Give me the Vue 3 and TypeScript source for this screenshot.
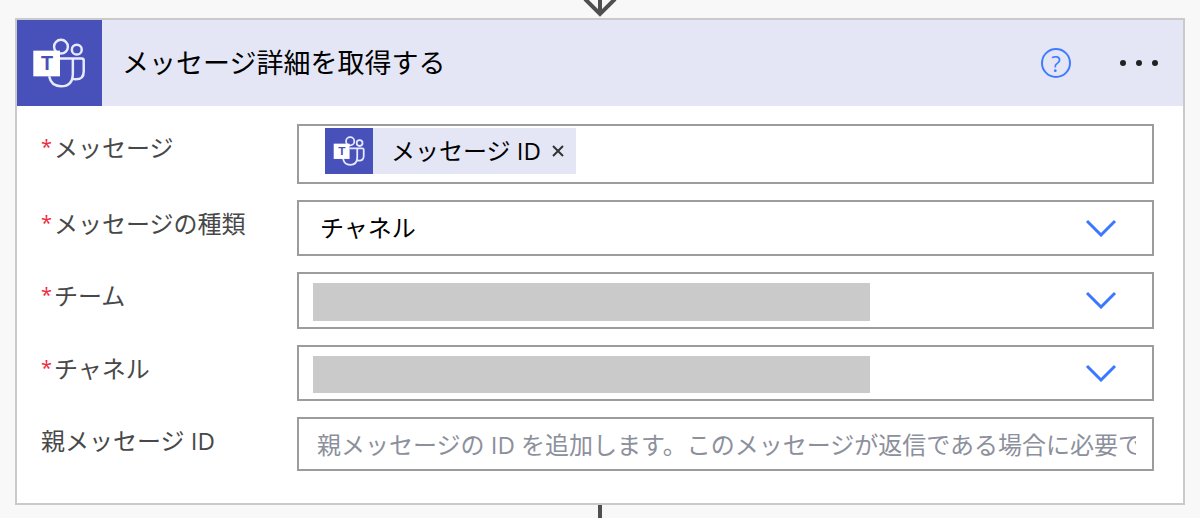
<script setup lang="ts">
import { ref } from 'vue'

interface PickerField {
  id: string
  label: string
  value: string
  hidden: boolean
  size: string
}

const pickers = ref<PickerField[]>([
  { id: 'message-type', label: 'メッセージの種類', value: 'チャネル', hidden: false, size: 'medium' },
  { id: 'team', label: 'チーム', value: '', hidden: true, size: 'large' },
  { id: 'channel', label: 'チャネル', value: '', hidden: true, size: 'medium' },
])
const hasToken = ref(true)
const parentId = ref('')
</script>

<template>
  <main class="flow">
    <svg class="arrow" viewBox="0 0 36 18" aria-hidden="true">
      <path d="M18 0V14M3 -1L18 14L33 -1" />
    </svg>

    <section class="card">
      <header class="head">
        <span class="brand">
          <svg viewBox="0 0 85 87" aria-hidden="true">
            <g class="lines">
              <circle cx="44" cy="27" r="7" />
              <circle cx="60" cy="30" r="5" />
              <path d="M43 39H65Q67 39 67 41V52Q67 60 59 60Q57 60 55 59M56 39V54Q56 67 44 67Q34 67 32 57" />
            </g>
            <rect class="tile" x="16" y="31" width="27" height="26" />
            <text class="mark" x="30" y="51">T</text>
          </svg>
        </span>
        <h1 class="title">メッセージ詳細を取得する</h1>
        <button class="help" type="button" aria-label="ヘルプ">?</button>
        <button class="more" type="button" aria-label="その他">
          <svg viewBox="0 0 40 8" aria-hidden="true">
            <circle cx="4" cy="4" r="3" />
            <circle cx="20" cy="4" r="3" />
            <circle cx="36" cy="4" r="3" />
          </svg>
        </button>
      </header>

      <form class="form" @submit.prevent>
        <div class="row">
          <span id="message-label" class="label"><span class="star">*</span>メッセージ</span>
          <div class="box tokens" role="group" aria-labelledby="message-label">
            <span v-if="hasToken" class="token">
              <span class="badge">
                <svg viewBox="15 18 54 51" aria-hidden="true">
                  <g class="lines">
                    <circle cx="44" cy="27" r="7" />
                    <circle cx="60" cy="30" r="5" />
                    <path d="M43 39H65Q67 39 67 41V52Q67 60 59 60Q57 60 55 59M56 39V54Q56 67 44 67Q34 67 32 57" />
                  </g>
                  <rect class="tile" x="16" y="31" width="27" height="26" />
                  <text class="mark" x="30" y="51">T</text>
                </svg>
              </span>
              <span class="token-text">メッセージ ID</span>
              <button class="remove" type="button" aria-label="削除" @click="hasToken = false">
                <svg viewBox="0 0 14 14" aria-hidden="true"><path d="M2 2L12 12M12 2L2 12" /></svg>
              </button>
            </span>
          </div>
        </div>

        <div v-for="field in pickers" :key="field.id" class="row">
          <label class="label" :for="field.id"><span class="star">*</span>{{ field.label }}</label>
          <div class="picker" :class="field.size">
            <select :id="field.id" v-model="field.value" class="box">
              <option :value="field.value">{{ field.value }}</option>
            </select>
            <span v-if="field.hidden" class="mask"></span>
            <svg class="chevron" viewBox="0 0 32 18" aria-hidden="true"><path d="M2 2L16 16L30 2" /></svg>
          </div>
        </div>

        <div class="row">
          <label class="label" for="parent-id">親メッセージ ID</label>
          <input
            id="parent-id"
            v-model="parentId"
            class="box entry"
            type="text"
            placeholder="親メッセージの ID を追加します。このメッセージが返信である場合に必要です"
          />
        </div>
      </form>
    </section>

    <span class="stem"></span>
  </main>
</template>

<style>
body {
  margin: 0;
  background: #f8f8f8;
}
</style>

<style scoped>
.flow {
  display: flex;
  flex-direction: column;
  align-items: center;
  font-family: "Open Sans", "Noto Sans CJK JP", sans-serif;
  font-size: 24px;
  line-height: 32px;
  color: #000;
}
.arrow {
  width: 36px;
  height: 18px;
  fill: none;
  stroke: #505050;
  stroke-width: 4;
}
.stem {
  width: 4px;
  height: 13px;
  background: #505050;
}
.card {
  box-sizing: border-box;
  align-self: stretch;
  margin: 0 15px;
  border: 2px solid #cbcaca;
  background: #fff;
}
.head {
  display: flex;
  align-items: center;
  background: #e4e6f5;
}
.brand {
  width: 85px;
  height: 86px;
  background: #4851ba;
}
.brand svg,
.badge svg {
  display: block;
  width: 100%;
  height: 100%;
}
.lines {
  fill: none;
  stroke: #e8eaff;
  stroke-width: 2.5;
}
.badge .lines {
  stroke-width: 3;
}
.tile {
  fill: #fff;
}
.mark {
  fill: #4851ba;
  font-family: "Liberation Sans", sans-serif;
  font-size: 20px;
  font-weight: 700;
  text-anchor: middle;
}
.title {
  flex: 1;
  margin: 0 0 0 20px;
  font-size: 27px;
  font-weight: 400;
}
button {
  padding: 0;
  border: 0;
  background: none;
  font-family: inherit;
  cursor: pointer;
}
.help {
  box-sizing: border-box;
  width: 30px;
  height: 30px;
  margin-right: 48px;
  border: 2px solid #3f7cff;
  border-radius: 50%;
  font-size: 22px;
  line-height: 26px;
  color: #3f7cff;
}
.more {
  width: 40px;
  height: 24px;
  margin-right: 24px;
}
.more svg {
  display: block;
  width: 40px;
  height: 8px;
  fill: #222;
}
.form {
  display: flex;
  flex-direction: column;
  gap: 16px;
  padding: 18px 29px 32px 24px;
}
.row {
  display: grid;
  grid-template-columns: 256px minmax(0, 1fr);
  align-items: start;
}
.label {
  padding-top: 8px;
  color: #484848;
}
.star {
  margin-right: 2px;
  font-size: 20px;
  line-height: 24px;
  vertical-align: 3px;
  color: #f0283c;
}
.box {
  box-sizing: border-box;
  width: 100%;
  border: 2px solid #9c9c9c;
  border-radius: 0;
  background: #fff;
}
.tokens {
  display: flex;
  align-items: flex-start;
  height: 60px;
  padding: 2px 26px;
}
.token {
  display: flex;
  align-items: center;
  height: 46px;
  background: #e4e6f5;
}
.badge {
  box-sizing: border-box;
  width: 48px;
  height: 46px;
  padding: 8px;
  background: #4851ba;
}
.token-text {
  margin: 0 10px 0 18px;
}
.remove {
  width: 14px;
  height: 14px;
  margin-right: 11px;
}
.remove svg {
  display: block;
  width: 14px;
  height: 14px;
  fill: none;
  stroke: #333;
  stroke-width: 2;
}
.picker {
  position: relative;
}
.picker .box {
  display: block;
  height: 56px;
  padding: 0 84px 0 21px;
  appearance: none;
  font: inherit;
  color: #000;
}
.picker.large .box {
  height: 57px;
}
.mask {
  position: absolute;
  top: 11px;
  bottom: 8px;
  left: 16px;
  width: 65%;
  background: #cacaca;
  pointer-events: none;
}
.chevron {
  position: absolute;
  top: 19px;
  right: 37px;
  width: 32px;
  height: 18px;
  fill: none;
  stroke: #3a78ff;
  stroke-width: 3;
  pointer-events: none;
}
.entry {
  height: 54px;
  padding: 0 16px 0 18px;
  font: inherit;
}
.entry::placeholder {
  color: #8c909c;
  opacity: 1;
}
</style>
